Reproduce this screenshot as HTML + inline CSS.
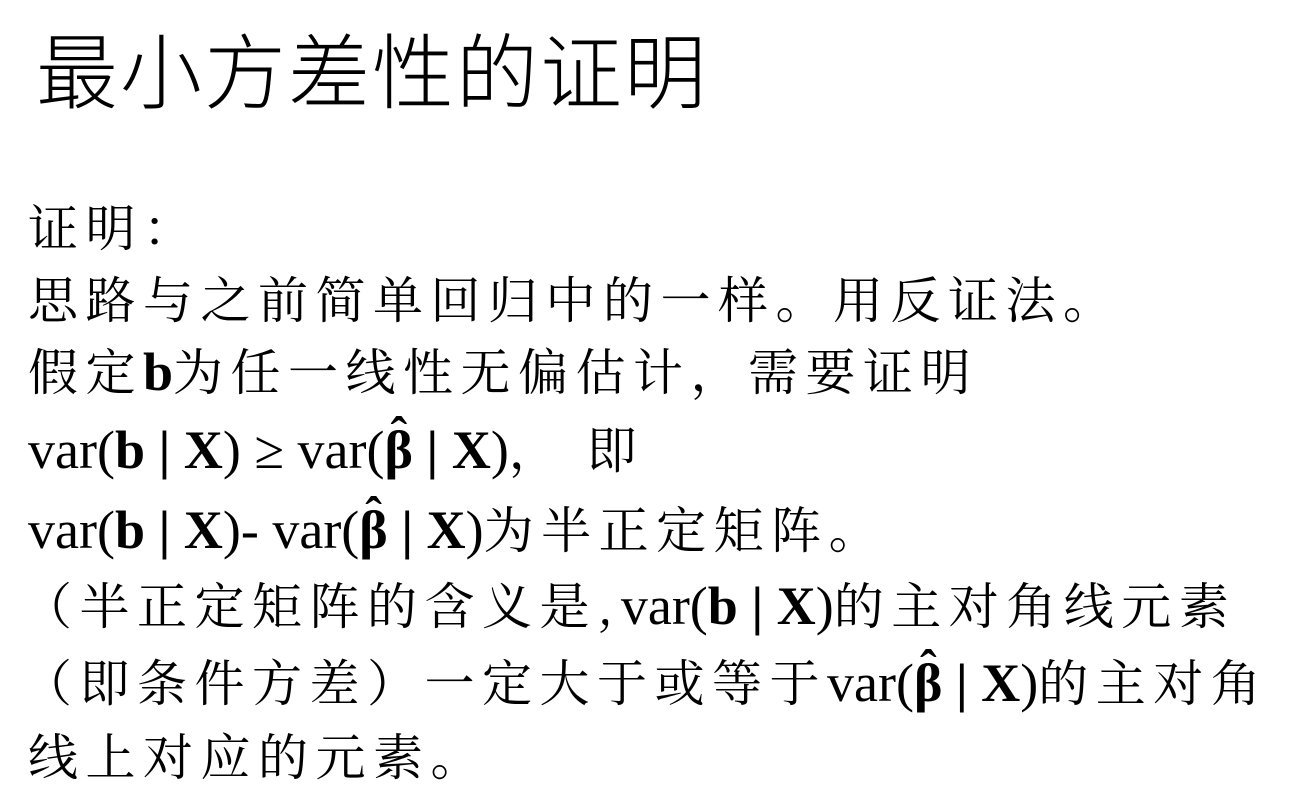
<!DOCTYPE html>
<html><head><meta charset="utf-8"><style>
body{margin:0;width:1289px;height:808px;background:#fff;overflow:hidden;position:relative;color:#000}
.t{position:absolute;left:36px;top:26px;font:300 82px "Noto Sans CJK SC",sans-serif;letter-spacing:2px;line-height:1;white-space:nowrap}
.l{position:absolute;left:28px;font-size:50px;line-height:1;white-space:nowrap;font-family:"Liberation Serif","Noto Serif CJK SC",serif}
.c{font-family:"Noto Serif CJK SC","Noto Sans CJK SC",serif;letter-spacing:7.5px}
.m{font-family:"Liberation Serif",serif;font-size:54px}
b{font-weight:bold}
.h{position:relative;display:inline-block}
.h::before{content:"ˆ";position:absolute;left:6px;top:-14px;font-weight:bold;font-size:50px}
.v{font-weight:bold}
</style></head><body>
<div class="t">最小方差性的证明</div>
<div class="l" style="top:200px"><span class="c">证明：</span></div>
<div class="l" style="top:272px"><span class="c">思路与之前简单回归中的一样。用反证法。</span></div>
<div class="l" style="top:344px"><span class="c">假定</span><b class="m">b</b><span class="c">为任一线性无偏估计，需要证明</span></div>
<div class="l" style="top:422px"><span class="m">var(<b>b</b> <span class="v">|</span> <b>X</b>) ≥ var(<b class="h">β</b> <span class="v">|</span> <b>X</b>)</span><span class="c">，&nbsp;即</span></div>
<div class="l" style="top:502px"><span class="m">var(<b>b</b> <span class="v">|</span> <b>X</b>)- var(<b class="h">β</b> <span class="v">|</span> <b>X</b>)</span><span class="c">为半正定矩阵。</span></div>
<div class="l" style="top:578px;left:22px"><span class="c">（半正定矩阵的含义是,</span><span class="m">var(<b>b</b> <span class="v">|</span> <b>X</b>)</span><span class="c">的主对角线元素</span></div>
<div class="l" style="top:655px;left:22px"><span class="c">（即条件方差）一定大于或等于</span><span class="m">var(<b class="h">β</b> <span class="v">|</span> <b>X</b>)</span><span class="c">的主对角</span></div>
<div class="l" style="top:729px"><span class="c">线上对应的元素。</span></div>
</body></html>
